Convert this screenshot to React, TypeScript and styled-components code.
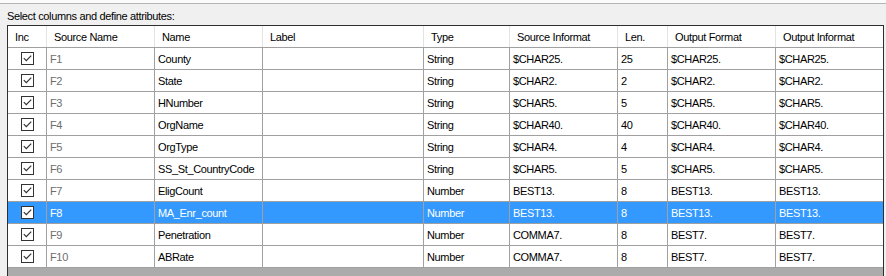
import React from "react";
import styled, { createGlobalStyle } from "styled-components";

const COLS = "39px 108px 108px 161px 86px 108px 50px 108px 107px";

const GlobalStyle = createGlobalStyle`
  html, body {
    margin: 0;
    padding: 0;
    background: #f0f0f0;
    overflow: hidden;
  }
  body {
    font-family: "Liberation Sans", Arial, sans-serif;
    font-size: 11px;
    letter-spacing: -0.35px;
    color: #000;
  }
`;

const Page = styled.div`
  width: 886px;
  height: 276px;
  display: flex;
  flex-direction: column;
  background: #f0f0f0;
`;

const TopStrip = styled.div`
  height: 3px;
  background: #fbfbfb;
  border-bottom: 1px solid #b4b4b4;
  flex: none;
`;

const Caption = styled.div`
  height: 21px;
  box-sizing: border-box;
  padding: 6px 0 0 7px;
  line-height: 13px;
  flex: none;
  white-space: nowrap;
`;

const GridFrame = styled.div`
  margin-left: 7px;
  width: 877px;
  box-sizing: border-box;
  flex: 1;
  border-top: 1px solid #2f2f2f;
  border-left: 1px solid #2f2f2f;
  border-right: 1px solid #2f2f2f;
  background: #ababab;
  display: flex;
  flex-direction: column;
  overflow: hidden;
`;

const HeaderRow = styled.div`
  display: grid;
  grid-template-columns: ${COLS};
  height: 22px;
  box-sizing: border-box;
  background: #fff;
  border-bottom: 1px solid #a0a0a0;
  flex: none;
`;

const HeaderCell = styled.div<{ $last?: boolean }>`
  box-sizing: border-box;
  padding: 2px 0 0 7px;
  line-height: 19px;
  white-space: nowrap;
  overflow: hidden;
  border-right: ${(p) => (p.$last ? "none" : "1px solid #e3e3e3")};
`;

const Row = styled.div<{ $selected?: boolean }>`
  display: grid;
  grid-template-columns: ${COLS};
  height: 22px;
  box-sizing: border-box;
  background: ${(p) => (p.$selected ? "#3399ff" : "#fff")};
  color: ${(p) => (p.$selected ? "#fff" : "#000")};
  border-bottom: 1px solid #a0a0a0;
  flex: none;
`;

const Cell = styled.div<{ $last?: boolean }>`
  box-sizing: border-box;
  padding: 2px 0 0 3px;
  line-height: 19px;
  white-space: nowrap;
  overflow: hidden;
  border-right: ${(p) => (p.$last ? "none" : "1px solid #a0a0a0")};
`;

const SourceCell = styled(Cell)<{ $sel?: boolean }>`
  color: ${(p) => (p.$sel ? "#fff" : "#6d6d6d")};
`;

const CheckCell = styled.div`
  box-sizing: border-box;
  border-right: 1px solid #a0a0a0;
  display: flex;
  align-items: center;
  justify-content: center;
  padding-left: 1px;
`;

const Box = styled.div`
  width: 13px;
  height: 13px;
  box-sizing: border-box;
  border: 1px solid #333;
  background: #fff;
  display: flex;
  align-items: center;
  justify-content: center;
`;

const Filler = styled.div`
  flex: 1;
  background: #ababab;
`;

type RowData = {
  src: string;
  name: string;
  type: string;
  inf: string;
  len: string;
  out: string;
  outInf: string;
};

const rows: RowData[] = [
  { src: "F1", name: "County", type: "String", inf: "$CHAR25.", len: "25", out: "$CHAR25.", outInf: "$CHAR25." },
  { src: "F2", name: "State", type: "String", inf: "$CHAR2.", len: "2", out: "$CHAR2.", outInf: "$CHAR2." },
  { src: "F3", name: "HNumber", type: "String", inf: "$CHAR5.", len: "5", out: "$CHAR5.", outInf: "$CHAR5." },
  { src: "F4", name: "OrgName", type: "String", inf: "$CHAR40.", len: "40", out: "$CHAR40.", outInf: "$CHAR40." },
  { src: "F5", name: "OrgType", type: "String", inf: "$CHAR4.", len: "4", out: "$CHAR4.", outInf: "$CHAR4." },
  { src: "F6", name: "SS_St_CountryCode", type: "String", inf: "$CHAR5.", len: "5", out: "$CHAR5.", outInf: "$CHAR5." },
  { src: "F7", name: "EligCount", type: "Number", inf: "BEST13.", len: "8", out: "BEST13.", outInf: "BEST13." },
  { src: "F8", name: "MA_Enr_count", type: "Number", inf: "BEST13.", len: "8", out: "BEST13.", outInf: "BEST13." },
  { src: "F9", name: "Penetration", type: "Number", inf: "COMMA7.", len: "8", out: "BEST7.", outInf: "BEST7." },
  { src: "F10", name: "ABRate", type: "Number", inf: "COMMA7.", len: "8", out: "BEST7.", outInf: "BEST7." },
];

const headers = [
  "Inc",
  "Source Name",
  "Name",
  "Label",
  "Type",
  "Source Informat",
  "Len.",
  "Output Format",
  "Output Informat",
];

const Check = () => (
  <Box>
    <svg width="11" height="11" viewBox="0 0 11 11">
      <path d="M1.8 5.2 L4.3 7.7 L9.2 2.6" fill="none" stroke="#333" strokeWidth="1.2" />
    </svg>
  </Box>
);

export default function App() {
  return (
    <>
      <GlobalStyle />
      <Page>
        <TopStrip />
        <Caption>Select columns and define attributes:</Caption>
        <GridFrame>
          <HeaderRow>
            {headers.map((h, i) => (
              <HeaderCell key={h} $last={i === headers.length - 1}>
                {h}
              </HeaderCell>
            ))}
          </HeaderRow>
          {rows.map((r, i) => {
            const sel = i === 7;
            return (
              <Row key={r.src} $selected={sel}>
                <CheckCell>
                  <Check />
                </CheckCell>
                <SourceCell $sel={sel}>{r.src}</SourceCell>
                <Cell>{r.name}</Cell>
                <Cell></Cell>
                <Cell>{r.type}</Cell>
                <Cell>{r.inf}</Cell>
                <Cell>{r.len}</Cell>
                <Cell>{r.out}</Cell>
                <Cell $last>{r.outInf}</Cell>
              </Row>
            );
          })}
          <Filler />
        </GridFrame>
      </Page>
    </>
  );
}
